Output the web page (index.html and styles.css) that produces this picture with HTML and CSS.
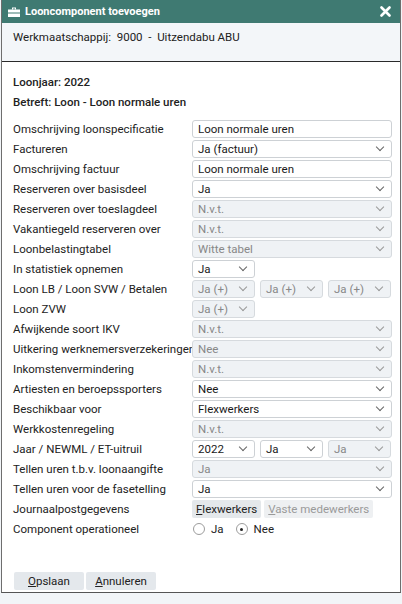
FILE: index.html
```html
<!DOCTYPE html>
<html lang="nl">
<head>
    <meta charset="UTF-8">
    <title>Looncomponent toevoegen</title>
    <link rel="stylesheet" href="styles.css">
</head>
<body>
    <div class="dialog">
        <div class="titlebar">
            <svg class="title-icon" width="12" height="10" viewBox="0 0 12 10">
                <path d="M4 0.5h4v2h-1v-1h-2v1h-1z" fill="#fff"/>
                <rect x="0" y="2.5" width="12" height="3" fill="#fff"/>
                <rect x="0" y="6.5" width="12" height="3.5" fill="#fff"/>
            </svg>
            <span class="title">Looncomponent toevoegen</span>
            <svg class="close" width="11" height="11" viewBox="0 0 11 11">
                <path d="M1.5 1.5l8 8M9.5 1.5l-8 8" stroke="#fff" stroke-width="2.6" stroke-linecap="round"/>
            </svg>
        </div>

        <div class="company">Werkmaatschappij:&nbsp; 9000&nbsp; -&nbsp; Uitzendabu ABU</div>

        <div class="content">
            <div class="info">Loonjaar: 2022</div>
            <div class="info">Betreft: Loon - Loon normale uren</div>

            <div class="form">
                <label>Omschrijving loonspecificatie</label>
                <div class="field"><div class="input">Loon normale uren</div></div>

                <label>Factureren</label>
                <div class="field"><div class="select">Ja (factuur)<i class="chev"></i></div></div>

                <label>Omschrijving factuur</label>
                <div class="field"><div class="input">Loon normale uren</div></div>

                <label>Reserveren over basisdeel</label>
                <div class="field"><div class="select">Ja<i class="chev"></i></div></div>

                <label>Reserveren over toeslagdeel</label>
                <div class="field"><div class="select disabled">N.v.t.<i class="chev"></i></div></div>

                <label>Vakantiegeld reserveren over</label>
                <div class="field"><div class="select disabled">N.v.t.<i class="chev"></i></div></div>

                <label>Loonbelastingtabel</label>
                <div class="field"><div class="select disabled">Witte tabel<i class="chev"></i></div></div>

                <label>In statistiek opnemen</label>
                <div class="field thirds"><div class="select">Ja<i class="chev"></i></div></div>

                <label>Loon LB / Loon SVW / Betalen</label>
                <div class="field thirds">
                    <div class="select disabled">Ja (+)<i class="chev"></i></div>
                    <div class="select disabled">Ja (+)<i class="chev"></i></div>
                    <div class="select disabled">Ja (+)<i class="chev"></i></div>
                </div>

                <label>Loon ZVW</label>
                <div class="field thirds"><div class="select disabled">Ja (+)<i class="chev"></i></div></div>

                <label>Afwijkende soort IKV</label>
                <div class="field"><div class="select disabled">N.v.t.<i class="chev"></i></div></div>

                <label>Uitkering werknemersverzekeringen</label>
                <div class="field"><div class="select disabled">Nee<i class="chev"></i></div></div>

                <label>Inkomstenvermindering</label>
                <div class="field"><div class="select disabled">N.v.t.<i class="chev"></i></div></div>

                <label>Artiesten en beroepssporters</label>
                <div class="field"><div class="select">Nee<i class="chev"></i></div></div>

                <label>Beschikbaar voor</label>
                <div class="field"><div class="select">Flexwerkers<i class="chev"></i></div></div>

                <label>Werkkostenregeling</label>
                <div class="field"><div class="select disabled">N.v.t.<i class="chev"></i></div></div>

                <label>Jaar / NEWML / ET-uitruil</label>
                <div class="field thirds">
                    <div class="select">2022<i class="chev"></i></div>
                    <div class="select">Ja<i class="chev"></i></div>
                    <div class="select disabled">Ja<i class="chev"></i></div>
                </div>

                <label>Tellen uren t.b.v. loonaangifte</label>
                <div class="field"><div class="select disabled">Ja<i class="chev"></i></div></div>

                <label>Tellen uren voor de fasetelling</label>
                <div class="field"><div class="select">Ja<i class="chev"></i></div></div>

                <label>Journaalpostgegevens</label>
                <div class="field tabs">
                    <span class="tab active"><u>F</u>lexwerkers</span>
                    <span class="tab"><u>V</u>aste medewerkers</span>
                </div>

                <label>Component operationeel</label>
                <div class="field radios">
                    <span class="radio"></span><span class="radio-label">Ja</span>
                    <span class="radio checked"></span><span class="radio-label">Nee</span>
                </div>
            </div>

            <div class="buttons">
                <span class="btn"><u>O</u>pslaan</span>
                <span class="btn"><u>A</u>nnuleren</span>
            </div>
        </div>
    </div>
</body>
</html>
```

FILE: styles.css
```css
body {
    margin: 0;
    background-color: #f2f5f8;
    font-family: Roboto, "Liberation Sans", Arial, sans-serif;
    font-size: 11.5px;
    color: #222;
}

.dialog {
    width: 398px;
    height: 592px;
    margin: 0 1px;
    border-left: 1px solid #6e6e6e;
    border-right: 1px solid #6e6e6e;
    border-bottom: 1px solid #555;
    display: flex;
    flex-direction: column;
}

.titlebar {
    height: 23px;
    background-color: #3f7a72;
    color: #fff;
    display: flex;
    align-items: center;
    padding: 0 9px 0 6px;
}

.title-icon {
    margin-right: 5px;
}

.title {
    font-weight: bold;
    font-size: 11px;
    flex: 1;
}

.company {
    height: 39px;
    box-sizing: border-box;
    background-color: #f3f6f9;
    padding: 7px 11px;
    border-bottom: 1px solid #2a2a2a;
    line-height: 14px;
}

.content {
    flex: 1;
    background-color: #fff;
    padding: 10px 8px 0 11px;
    display: flex;
    flex-direction: column;
}

.info {
    line-height: 20px;
    font-weight: 500;
}

.form {
    margin-top: 7px;
    display: grid;
    grid-template-columns: 179px 1fr;
    grid-auto-rows: 20px;
}

.form label {
    line-height: 20px;
    white-space: nowrap;
}

.field {
    display: flex;
    align-items: center;
}

.input,
.select {
    flex: 1;
    height: 18px;
    box-sizing: border-box;
    border: 1px solid #cdd1d5;
    border-radius: 3px;
    background-color: #fff;
    padding: 0 5px;
    line-height: 16px;
    font-size: 11.5px;
    color: #1a1a1a;
    position: relative;
}

.select.disabled {
    background-color: #eff2f5;
    border-color: #d6dade;
    color: #888;
}

.chev {
    position: absolute;
    right: 8px;
    top: 3px;
    width: 5px;
    height: 5px;
    border-right: 1px solid #666;
    border-bottom: 1px solid #666;
    transform: rotate(45deg);
}

.disabled .chev {
    border-color: #999;
}

.thirds {
    gap: 5px;
}

.thirds .select {
    flex: 0 0 63px;
}

.tabs {
    gap: 3px;
}

.tab {
    height: 18px;
    line-height: 18px;
    padding: 0 4px;
    background-color: #eef0f2;
    color: #9a9a9a;
    border-radius: 2px;
}

.tab.active {
    background-color: #e4e8eb;
    color: #222;
}

.radios {
    padding-left: 1px;
}

.radio {
    width: 12px;
    height: 12px;
    box-sizing: border-box;
    border: 1px solid #9c9c9c;
    border-radius: 50%;
    position: relative;
}

.radio.checked::after {
    content: "";
    position: absolute;
    left: 3.5px;
    top: 3.5px;
    width: 3px;
    height: 3px;
    border-radius: 50%;
    background-color: #222;
}

.radio-label {
    margin: 0 12px 0 6px;
}

.buttons {
    margin-top: 33px;
    display: flex;
    gap: 2px;
    margin-left: 1px;
}

.btn {
    width: 70px;
    height: 18px;
    line-height: 18px;
    text-align: center;
    background-color: #e4e8ec;
    border-radius: 2px;
    color: #222;
}
```
